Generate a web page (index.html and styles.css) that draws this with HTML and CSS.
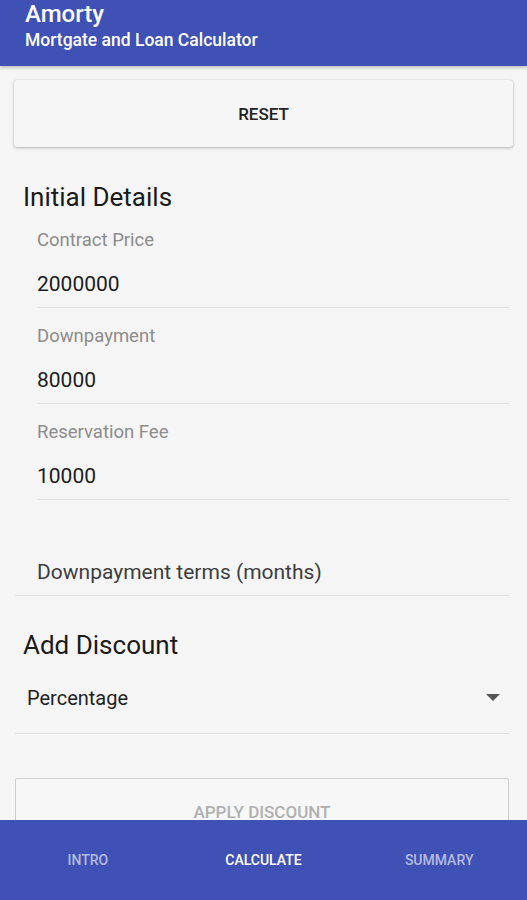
FILE: index.html
```html
<!DOCTYPE html>
<html lang="en">
  <head>
    <meta charset="UTF-8" />
    <meta name="viewport" content="width=device-width, initial-scale=1.0" />
    <title>Amorty</title>
    <link rel="stylesheet" href="styles.css">
  </head>
  <body>
    <div class="app">
      <header class="app-bar">
        <h1 class="app-title">Amorty</h1>
        <p class="app-subtitle">Mortgate and Loan Calculator</p>
      </header>

      <main class="content">
        <button class="btn btn-raised">Reset</button>

        <h2 class="section-title">Initial Details</h2>

        <div class="field">
          <div class="field-label">Contract Price</div>
          <div class="field-value">2000000</div>
        </div>
        <div class="field">
          <div class="field-label">Downpayment</div>
          <div class="field-value">80000</div>
        </div>
        <div class="field">
          <div class="field-label">Reservation Fee</div>
          <div class="field-value">10000</div>
        </div>

        <div class="hint-field">Downpayment terms (months)</div>

        <h2 class="section-title discount-title">Add Discount</h2>

        <div class="spinner">
          <span>Percentage</span>
          <span class="spinner-arrow"></span>
        </div>

        <button class="btn btn-outline" disabled>Apply Discount</button>
      </main>

      <nav class="tabs">
        <div class="tab">Intro</div>
        <div class="tab active">Calculate</div>
        <div class="tab">Summary</div>
      </nav>
    </div>
  </body>
</html>
```

FILE: styles.css
```css
body {
  margin: 0;
  font-family: Roboto, "Liberation Sans", sans-serif;
  background: #f5f5f5;
  color: #1f1f1f;
}

.app {
  height: 100vh;
  display: flex;
  flex-direction: column;
  overflow: hidden;
}

/* top bar */
.app-bar {
  height: 66px;
  flex-shrink: 0;
  box-sizing: border-box;
  padding-left: 25px;
  background: #3f51b5;
  color: #fff;
  box-shadow: 0 2px 3px rgba(0, 0, 0, 0.2);
  position: relative;
  z-index: 1;
}

.app-title {
  margin: 0;
  font-size: 24px;
  font-weight: 500;
  line-height: 28px;
}

.app-subtitle {
  margin: 0;
  font-size: 17.5px;
  font-weight: 500;
  line-height: 24px;
}

/* scrolling content */
.content {
  flex: 1;
  overflow: hidden;
  padding: 14px 14px 0;
}

.btn {
  display: block;
  width: 100%;
  height: 67px;
  font-family: inherit;
  font-size: 17px;
  font-weight: 500;
  text-transform: uppercase;
  border-radius: 3px;
  cursor: pointer;
}

.btn-raised {
  background: #f5f5f5;
  color: #222;
  border: none;
  box-shadow: 0 1px 3px rgba(0, 0, 0, 0.25), 0 0 1px rgba(0, 0, 0, 0.2);
}

.btn-outline {
  width: 494px;
  margin: 44px 0 0 1px;
  background: #f7f7f7;
  color: #b0b0b0;
  border: 1px solid #cfcfcf;
  border-radius: 2px;
}

.section-title {
  margin: 35px 0 0 9px;
  font-size: 26px;
  font-weight: 400;
  line-height: 30px;
  color: #1a1a1a;
}

/* text inputs */
.field {
  margin: 22px 4px 0 23px;
  padding-bottom: 9px;
  border-bottom: 1px solid #e2e2e2;
}

.field-label {
  height: 16px;
  font-size: 18.5px;
  line-height: 12px;
  color: #8c8c8c;
}

.field-value {
  margin-top: 20px;
  font-size: 21px;
  line-height: 28px;
  color: #1c1c1c;
}

.hint-field {
  margin: 59px 4px 0 1px;
  padding: 0 0 10px 22px;
  font-size: 21px;
  line-height: 26px;
  color: #3d3d3d;
  border-bottom: 1px solid #e2e2e2;
}

.discount-title {
  margin-top: 34px;
}

/* dropdown */
.spinner {
  display: flex;
  justify-content: space-between;
  align-items: center;
  margin: 25px 4px 0 1px;
  padding: 0 9px 22px 12px;
  font-size: 20px;
  line-height: 26px;
  border-bottom: 1px solid #e2e2e2;
}

.spinner-arrow {
  width: 0;
  height: 0;
  margin-top: -2px;
  border-left: 7px solid transparent;
  border-right: 7px solid transparent;
  border-top: 7px solid #555;
}

/* bottom tabs */
.tabs {
  height: 80px;
  flex-shrink: 0;
  display: grid;
  grid-template-columns: repeat(3, 1fr);
  align-items: center;
  background: #3f51b5;
  position: relative;
  z-index: 1;
}

.tab {
  text-align: center;
  font-size: 14px;
  font-weight: 500;
  text-transform: uppercase;
  color: rgba(255, 255, 255, 0.62);
}

.tab.active {
  color: #fff;
}
```
